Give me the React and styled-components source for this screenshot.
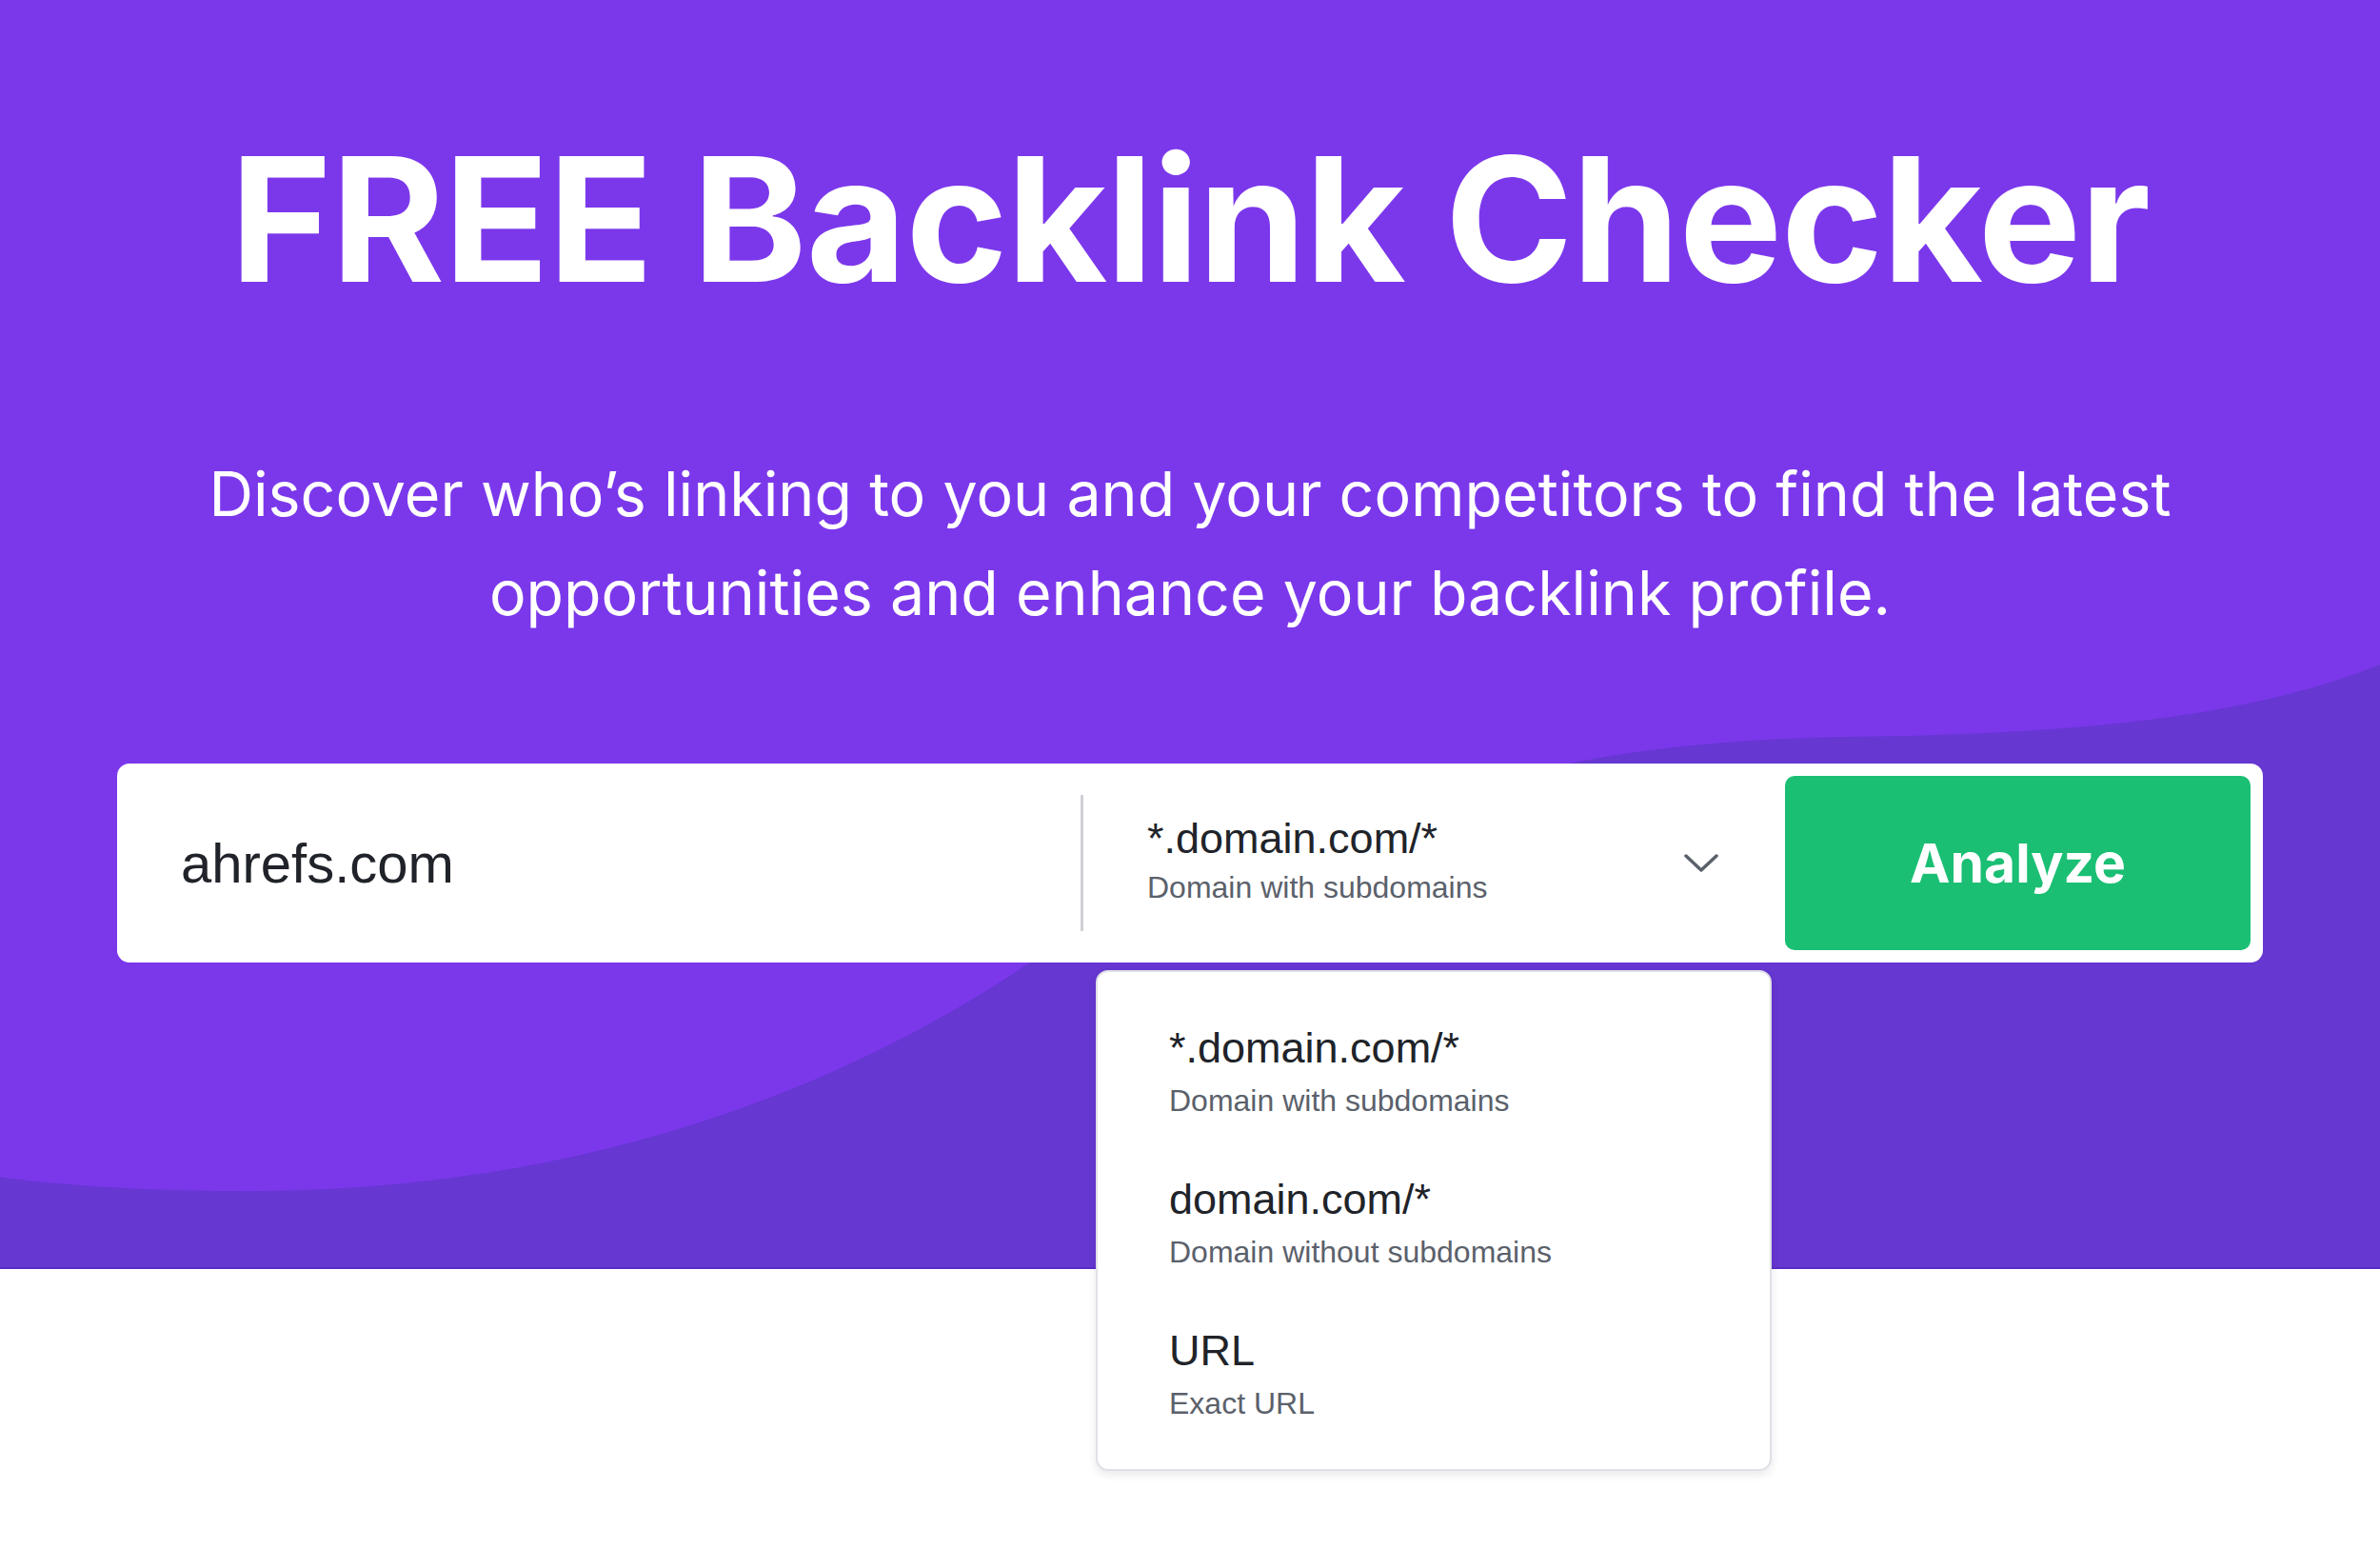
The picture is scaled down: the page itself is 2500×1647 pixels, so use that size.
import React from 'react';
import styled, { createGlobalStyle } from 'styled-components';

const GlobalStyle = createGlobalStyle`
  html, body {
    margin: 0;
    padding: 0;
    background: #ffffff;
  }
  * {
    box-sizing: border-box;
  }
`;

const Page = styled.div`
  width: 2500px;
  min-height: 1647px;
  background: #ffffff;
`;

const Hero = styled.section`
  position: relative;
  height: 1333px;
  background: #7b38eb;
  border-bottom: 2px solid #5a2cc9;
`;

const Wave = styled.svg`
  position: absolute;
  inset: 0;
  width: 100%;
  height: 100%;
  display: block;
`;

const HeroInner = styled.div`
  position: relative;
  z-index: 1;
  display: flex;
  flex-direction: column;
  align-items: center;
  padding-top: 139px;
  font-family: Inter, 'Noto Sans', sans-serif;
  color: #ffffff;
`;

const Title = styled.h1`
  margin: 0;
  font-size: 182px;
  line-height: 1;
  font-weight: 700;
  letter-spacing: -1px;
`;

const Subtitle = styled.p`
  margin: 146px 0 0;
  font-size: 64.5px;
  line-height: 104px;
  font-weight: 400;
  text-align: center;
`;

const SearchBar = styled.div`
  position: relative;
  margin-top: 127px;
  width: 2254px;
  height: 209px;
  padding: 13px;
  display: flex;
  align-items: stretch;
  background: #ffffff;
  border-radius: 13px;
  font-family: 'Liberation Sans', Arial, sans-serif;
`;

const DomainInput = styled.input`
  flex: 0 0 999px;
  border: none;
  outline: none;
  background: transparent;
  padding: 0 0 0 54px;
  font-family: inherit;
  font-size: 58px;
  color: #202329;
`;

const Divider = styled.div`
  flex: 0 0 3px;
  align-self: center;
  height: 143px;
  background: #cfd0d6;
`;

const ModeSelect = styled.div`
  flex: 0 0 737px;
  display: flex;
  align-items: center;
  justify-content: space-between;
  padding: 0 70px 0 67px;
  cursor: pointer;
`;

const ModeText = styled.div`
  display: flex;
  flex-direction: column;
`;

const ModeMain = styled.span`
  font-size: 45px;
  line-height: ${p => p.$lh || 50}px;
  color: #202329;
`;

const ModeSub = styled.span`
  font-size: 32px;
  line-height: ${p => p.$lh || 52}px;
  color: #5b616b;
`;

const AnalyzeButton = styled.button`
  flex: 0 0 489px;
  border: none;
  border-radius: 10px;
  background: #1bbf74;
  color: #ffffff;
  font-family: Inter, 'Liberation Sans', sans-serif;
  font-size: 57px;
  font-weight: 700;
  cursor: pointer;
`;

const Menu = styled.ul`
  position: absolute;
  top: calc(100% + 8px);
  left: 1028px;
  width: 710px;
  margin: 0;
  padding: 53px 0 40px;
  list-style: none;
  display: flex;
  flex-direction: column;
  gap: 48px;
  background: #ffffff;
  border: 2px solid #e0e1e7;
  border-radius: 13px;
  box-shadow: 0 4px 10px rgba(30, 20, 60, 0.1);
`;

const MenuItem = styled.li`
  display: flex;
  flex-direction: column;
  padding-left: 75px;
  cursor: pointer;
`;

const Chevron = () => (
  <svg width="36" height="20" viewBox="0 0 36 20" fill="none">
    <path d="M2 2 L18 17 L34 2" stroke="#5b616b" strokeWidth="3.5" strokeLinecap="round" strokeLinejoin="round" />
  </svg>
);

const modes = [
  { value: '*.domain.com/*', label: 'Domain with subdomains' },
  { value: 'domain.com/*', label: 'Domain without subdomains' },
  { value: 'URL', label: 'Exact URL' },
];

const App = () => (
  <Page>
    <GlobalStyle />
    <Hero>
      <Wave viewBox="0 0 2500 1333" preserveAspectRatio="none">
        <path
          d="M2500 699 C2350 760 2150 772 1950 775 C1820 777 1720 788 1640 805 C1450 845 1250 900 1084 1011 C880 1150 600 1255 250 1253 C130 1252 50 1245 0 1238 L0 1333 L2500 1333 Z"
          fill="#6637d1"
        />
      </Wave>
      <HeroInner>
        <Title>FREE Backlink Checker</Title>
        <Subtitle>
          Discover who’s linking to you and your competitors to find the latest
          <br />
          opportunities and enhance your backlink profile.
        </Subtitle>
        <SearchBar>
          <DomainInput defaultValue="ahrefs.com" />
          <Divider />
          <ModeSelect>
            <ModeText>
              <ModeMain>{modes[0].value}</ModeMain>
              <ModeSub>{modes[0].label}</ModeSub>
            </ModeText>
            <Chevron />
          </ModeSelect>
          <AnalyzeButton>Analyze</AnalyzeButton>
          <Menu>
            {modes.map(m => (
              <MenuItem key={m.value}>
                <ModeMain $lh={53}>{m.value}</ModeMain>
                <ModeSub $lh={58}>{m.label}</ModeSub>
              </MenuItem>
            ))}
          </Menu>
        </SearchBar>
      </HeroInner>
    </Hero>
  </Page>
);

export default App;
